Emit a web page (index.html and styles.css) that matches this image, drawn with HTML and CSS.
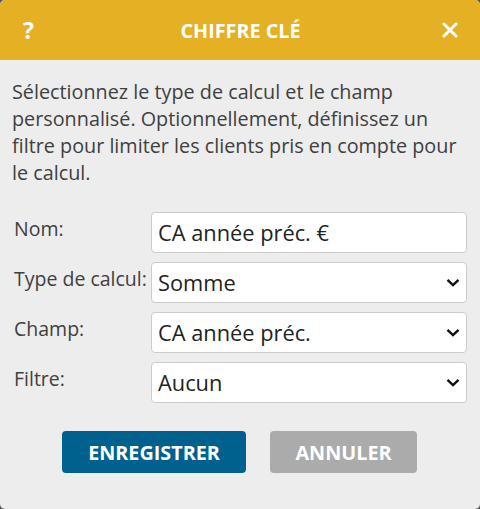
FILE: index.html
```html
<!DOCTYPE html>
<html lang="fr">
<head>
<meta charset="utf-8">
<link rel="stylesheet" href="styles.css">
</head>
<body>
<div class="dialog">
  <header class="head">
    <span class="help">?</span>
    <h1 class="title">CHIFFRE CLÉ</h1>
    <svg class="close" width="16" height="16" viewBox="0 0 16 16"><path d="M2 2L14 14M14 2L2 14" stroke="#fff" stroke-width="3" stroke-linecap="round"/></svg>
  </header>
  <div class="body">
    <p class="intro">Sélectionnez le type de calcul et le champ personnalisé. Optionnellement, définissez un filtre pour limiter les clients pris en compte pour le calcul.</p>
    <div class="form">
      <label class="lbl">Nom:</label>
      <div class="field">CA année préc. €</div>
      <label class="lbl">Type de calcul:</label>
      <div class="field sel">Somme<svg class="chev" width="14" height="9" viewBox="0 0 14 9"><path d="M1.5 1.8L7 7L12.5 1.8" fill="none" stroke="#111" stroke-width="2.4"/></svg></div>
      <label class="lbl">Champ:</label>
      <div class="field sel">CA année préc.<svg class="chev" width="14" height="9" viewBox="0 0 14 9"><path d="M1.5 1.8L7 7L12.5 1.8" fill="none" stroke="#111" stroke-width="2.4"/></svg></div>
      <label class="lbl">Filtre:</label>
      <div class="field sel">Aucun<svg class="chev" width="14" height="9" viewBox="0 0 14 9"><path d="M1.5 1.8L7 7L12.5 1.8" fill="none" stroke="#111" stroke-width="2.4"/></svg></div>
    </div>
    <div class="actions">
      <button class="btn save">ENREGISTRER</button>
      <button class="btn cancel">ANNULER</button>
    </div>
  </div>
</div>
</body>
</html>
```
FILE: styles.css
```css
html, body { margin: 0; padding: 0; }
body {
  background: #555;
  font-family: "Open Sans", sans-serif;
  width: 480px;
  height: 509px;
}
.dialog {
  width: 480px;
  height: 509px;
  background: #ededed;
  border-radius: 5px;
  overflow: hidden;
  display: flex;
  flex-direction: column;
}
.head {
  height: 60px;
  flex: none;
  background: #e5b024;
  display: flex;
  align-items: center;
  justify-content: space-between;
  padding: 0 22px 0 23px;
  color: #fff;
}
.help { font-weight: 700; font-size: 23px; width: 16px; }
.title { margin: 0; font-size: 19.8px; font-weight: 700; letter-spacing: 0; }
.close { display: block; }
.body { padding: 18px 13px 0 12px; }
.intro {
  margin: 0;
  font-size: 19.8px;
  line-height: 27px;
  color: #404040;
}
.form {
  margin-top: 26px;
  display: grid;
  grid-template-columns: 139px 1fr;
  row-gap: 9px;
}
.lbl {
  font-size: 19.5px;
  color: #404040;
  padding: 5px 0 0 2px;
  line-height: 24px;
  white-space: nowrap;
}
.field {
  box-sizing: border-box;
  height: 41px;
  background: #fff;
  border: 1px solid #ccc;
  border-radius: 4px;
  font-size: 21.8px;
  color: #222;
  padding: 0 6px 0 6px;
  display: flex;
  align-items: center;
  justify-content: space-between;
}
.chev { display: block; }
.actions {
  margin-top: 28px;
  display: flex;
  justify-content: center;
  gap: 24px;
}
.btn {
  height: 42px;
  border: none;
  border-radius: 4px;
  color: #fff;
  font-family: "Open Sans", sans-serif;
  font-weight: 700;
  font-size: 19.8px;
}
.save { width: 184px; background: #00618e; }
.cancel { width: 147px; background: #ababab; }
```
